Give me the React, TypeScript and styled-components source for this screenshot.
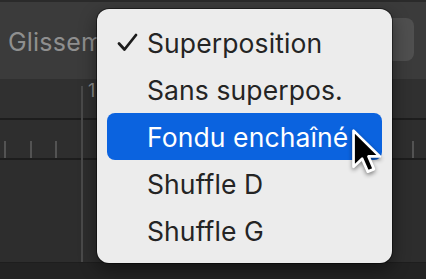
import React from "react";
import styled, { createGlobalStyle } from "styled-components";

const Global = createGlobalStyle`
  html, body { margin: 0; padding: 0; background: #2c2c2c; }
  body { font-family: Inter, "Liberation Sans", sans-serif; }
`;

const Window = styled.div`
  position: relative;
  width: 426px;
  height: 279px;
  overflow: hidden;
  display: flex;
  flex-direction: column;
  background: #2c2c2c;
`;

const Toolbar = styled.div`
  height: 77px;
  flex: none;
  border-top: 2px solid #2a2a2a;
  background: #3b3b3b;
  display: flex;
  align-items: center;
  justify-content: space-between;
  padding: 0 12px 0 8px;
`;

const ToolLabel = styled.span`
  font-size: 25px;
  color: #8f8f8f;
  letter-spacing: 0.2px;
  margin-top: 2px;
`;

const ToolButton = styled.div`
  width: 50px;
  height: 43px;
  margin-top: -2px;
  border-radius: 8px;
  background: #4f4f4f;
  display: flex;
  align-items: center;
  padding-left: 4px;
  box-sizing: border-box;
`;

const Band = styled.div<{ $h: number; $bg: string }>`
  height: ${(p) => p.$h}px;
  flex: none;
  background: ${(p) => p.$bg};
  border-bottom: 2px solid #1d1d1d;
  position: relative;
`;

const Ticks = styled.div`
  position: absolute;
  left: 0;
  right: 0;
  bottom: 0;
  height: 17px;
`;

const Tick = styled.div<{ $x: number }>`
  position: absolute;
  left: ${(p) => p.$x}px;
  bottom: 0;
  width: 2px;
  height: 17px;
  background: #535353;
`;

const Tracks = styled.div`
  flex: 1;
  background: #2d2d2d;
`;

const Footer = styled.div`
  height: 16px;
  flex: none;
  background: #232323;
  border-top: 1px solid #1e1e1e;
`;

const Playhead = styled.div`
  position: absolute;
  left: 81px;
  top: 86px;
  width: 2px;
  height: 176px;
  background: #4a4a4a;
`;

const RulerNum = styled.span`
  position: absolute;
  left: 88px;
  top: 80px;
  font-size: 18px;
  color: #8a8a8a;
`;

const Menu = styled.div`
  position: absolute;
  left: 97px;
  top: 9px;
  width: 295px;
  height: 254px;
  box-sizing: border-box;
  padding: 10px 10px 9px;
  border-radius: 12px;
  background: #ececec;
  box-shadow: 0 0 0 1px rgba(0, 0, 0, 0.45), 0 6px 18px rgba(0, 0, 0, 0.45);
  display: flex;
  flex-direction: column;
`;

const Item = styled.div<{ $active?: boolean }>`
  height: 47px;
  flex: none;
  display: flex;
  align-items: center;
  border-radius: 8px;
  padding-left: 10px;
  font-size: 26.5px;
  letter-spacing: 0.1px;
  color: ${(p) => (p.$active ? "#ffffff" : "#242424")};
  background: ${(p) => (p.$active ? "#0b63df" : "transparent")};
`;

const CheckSlot = styled.span`
  width: 30px;
  flex: none;
  display: flex;
  align-items: center;
`;

const Cursor = styled.svg`
  position: absolute;
  left: 349px;
  top: 127px;
  filter: drop-shadow(0 2px 2px rgba(0, 0, 0, 0.45));
`;

const Check = () => (
  <svg width="21" height="19" viewBox="0 0 21 19">
    <path
      d="M2 10.5 L7.5 16.5 L19 2"
      fill="none"
      stroke="#1c1c1c"
      strokeWidth="2.8"
      strokeLinecap="round"
      strokeLinejoin="round"
    />
  </svg>
);

const items = [
  { label: "Superposition", checked: true },
  { label: "Sans superpos." },
  { label: "Fondu enchaîné", active: true },
  { label: "Shuffle D" },
  { label: "Shuffle G" },
];

export default function App() {
  return (
    <>
      <Global />
      <Window>
        <Toolbar>
          <ToolLabel>Glissement</ToolLabel>
          <ToolButton>
            <svg width="4" height="12" viewBox="0 0 4 12">
              <rect x="1" y="0" width="2" height="12" fill="#8a8a8a" />
            </svg>
          </ToolButton>
        </Toolbar>
        <Band $h={39} $bg="#303030" />
        <Band $h={38} $bg="#2e2e2e">
          <Ticks>
            <Tick $x={4} />
            <Tick $x={30} />
            <Tick $x={55} />
            <Tick $x={412} />
          </Ticks>
        </Band>
        <Tracks />
        <Footer />
        <RulerNum>1</RulerNum>
        <Playhead />
        <Menu>
          {items.map((it) => (
            <Item key={it.label} $active={it.active}>
              <CheckSlot>{it.checked ? <Check /> : null}</CheckSlot>
              {it.label}
            </Item>
          ))}
        </Menu>
        <Cursor width="34" height="48" viewBox="0 0 15 21">
          <path
            d="M2 1.5 L2 17.5 L5.8 13.9 L8.3 19.6 L11 18.5 L8.6 12.9 L13.6 12.9 Z"
            fill="#000"
            stroke="#fff"
            strokeWidth="1.2"
            strokeLinejoin="round"
          />
        </Cursor>
      </Window>
    </>
  );
}
